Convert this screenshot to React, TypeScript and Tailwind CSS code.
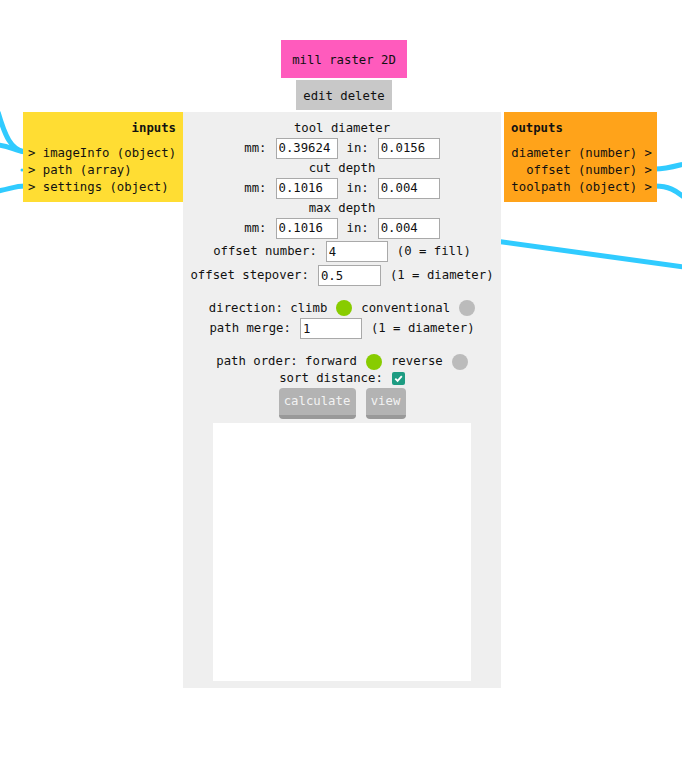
import React from "react";

const mono = { fontFamily: '"DejaVu Sans Mono", "Liberation Mono", monospace' };

const Field = ({ value, w = "w-[62px]" }: { value: string; w?: string }) => (
  <input
    readOnly
    value={value}
    className={`${w} h-[21px] border border-[#a9a9a9] bg-white px-[2px] text-[12.3px] text-[#111] outline-none`}
    style={mono}
  />
);

const Dot = ({ on }: { on: boolean }) => (
  <span className={`inline-block h-[16px] w-[16px] rounded-full ${on ? "bg-[#88cc00]" : "bg-[#bbbbbb]"}`} />
);

const UnitRow = ({ mm, inch }: { mm: string; inch: string }) => (
  <div className="flex h-[23px] items-center justify-center gap-[9px]">
    <span>mm:</span>
    <Field value={mm} />
    <span>in:</span>
    <Field value={inch} />
  </div>
);

const Wires = () => (
  <svg className="absolute inset-0" width={682} height={764} fill="none" stroke="#30cbff" strokeWidth={5}>
    <path d="M -2 112 C 5 136, 11 150, 25 152" />
    <path d="M -2 145 C 10 146, 15 151, 25 152" />
    <path d="M -2 191 C 10 189, 15 186, 25 186" />
    <circle cx={22} cy={170} r={1.5} fill="#30cbff" stroke="none" />
    <path d="M 655 169 C 665 169, 672 167, 684 164" />
    <path d="M 655 186 C 668 186, 676 190, 686 199" />
    <path d="M 495 241 L 684 267" />
  </svg>
);

export default function App() {
  return (
    <div className="relative h-[764px] w-[682px] overflow-hidden bg-white text-[12.3px] leading-[17px] text-[#111] whitespace-nowrap" style={mono}>
      <Wires />

      <div className="absolute left-[23px] top-[40px] flex items-start">
        {/* inputs */}
        <div className="mt-[72px] w-[160px] bg-[#ffdd33] pb-[6px] pl-[5px] pr-[7px] pt-[7.5px]">
          <div className="text-right font-bold">inputs</div>
          <div className="mt-[8px]">
            <div>&gt; imageInfo (object)</div>
            <div>&gt; path (array)</div>
            <div>&gt; settings (object)</div>
          </div>
        </div>

        {/* node body */}
        <div className="flex w-[318px] flex-col items-center">
          <div className="ml-[4px] bg-[#ff5bbd] px-[11px] pb-[9px] pt-[12px]">mill raster 2D</div>
          <div className="ml-[4px] mt-[2px] bg-[#c8c8c8] px-[7.5px] pb-[5.5px] pt-[7.5px]">edit delete</div>
          <div className="mt-[2px] flex w-full flex-col items-center bg-[#efefef] pb-[7px] pt-[7.5px]">
            <div>tool diameter</div>
            <UnitRow mm="0.39624" inch="0.0156" />
            <div>cut depth</div>
            <UnitRow mm="0.1016" inch="0.004" />
            <div>max depth</div>
            <UnitRow mm="0.1016" inch="0.004" />
            <div className="flex h-[24px] items-center gap-[9px]">
              <span>offset number:</span>
              <Field value="4" />
              <span>(0 = fill)</span>
            </div>
            <div className="flex h-[24px] items-center gap-[9px]">
              <span>offset stepover:</span>
              <Field value="0.5" w="w-[63px]" />
              <span>(1 = diameter)</span>
            </div>

            <div className="mt-[12px] flex h-[17px] items-center gap-[9px]">
              <span>direction: climb</span>
              <Dot on />
              <span>conventional</span>
              <Dot on={false} />
            </div>
            <div className="flex h-[24px] items-center gap-[9px]">
              <span>path merge:</span>
              <Field value="1" />
              <span>(1 = diameter)</span>
            </div>

            <div className="mt-[12.5px] flex h-[17px] items-center gap-[9px]">
              <span>path order: forward</span>
              <Dot on />
              <span>reverse</span>
              <Dot on={false} />
            </div>
            <div className="flex h-[17px] items-center gap-[9px]">
              <span>sort distance:</span>
              <span className="flex h-[13px] w-[13px] items-center justify-center rounded-[2px] bg-[#1d9c82]">
                <svg width="11" height="11" viewBox="0 0 12 12" fill="none" stroke="white" strokeWidth={2}>
                  <path d="M2.5 6.2 L5 8.6 L9.6 3.4" />
                </svg>
              </span>
            </div>

            <div className="mt-[0.5px] flex gap-[10px]">
              <button className="h-[31px] w-[77px] rounded-[4px] border-b-4 border-[#999999] bg-[#b3b3b3] pt-[1px] text-[12.3px] text-[#f2f2f2]" style={mono}>
                calculate
              </button>
              <button className="h-[31px] w-[40px] rounded-[4px] border-b-4 border-[#999999] bg-[#b3b3b3] pt-[1px] text-[12.3px] text-[#f2f2f2]" style={mono}>
                view
              </button>
            </div>

            <div className="mt-[4px] h-[258px] w-[258px] bg-white" />
          </div>
        </div>

        {/* outputs */}
        <div className="ml-[3px] mt-[72px] w-[153px] bg-[#ffa31a] pb-[6px] pl-[7px] pr-[5px] pt-[7.5px]">
          <div className="font-bold">outputs</div>
          <div className="mt-[8px] text-right">
            <div>diameter (number) &gt;</div>
            <div>offset (number) &gt;</div>
            <div>toolpath (object) &gt;</div>
          </div>
        </div>
      </div>
    </div>
  );
}
